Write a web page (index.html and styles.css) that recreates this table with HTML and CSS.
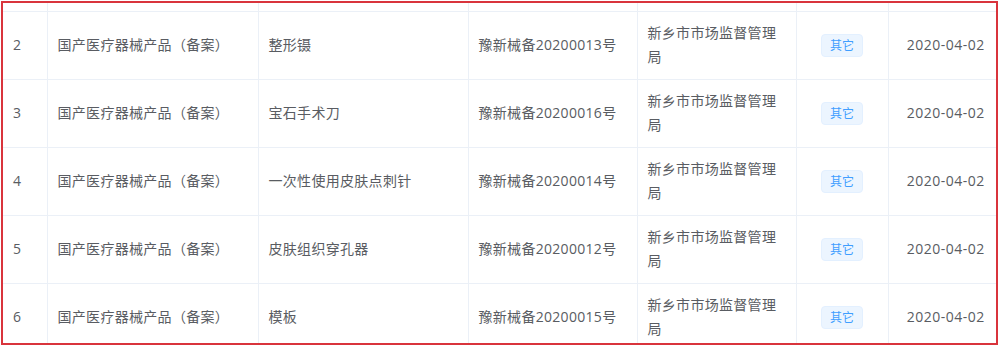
FILE: index.html
```html
<!DOCTYPE html>
<html lang="zh-CN">
<head>
<meta charset="utf-8">
<title>备案列表</title>
<link rel="stylesheet" href="styles.css">
</head>
<body>
<div class="frame">
  <table class="grid">
    <colgroup>
      <col class="c-no"><col class="c-type"><col class="c-name"><col class="c-code"><col class="c-org"><col class="c-tag"><col class="c-date">
    </colgroup>
    <tbody>
      <tr class="spacer"><td></td><td></td><td></td><td></td><td></td><td></td><td></td></tr>
      <tr>
        <td>2</td><td>国产医疗器械产品（备案）</td><td>整形镊</td><td>豫新械备20200013号</td><td>新乡市市场监督管理局</td>
        <td class="center"><span class="tag">其它</span></td><td class="date">2020-04-02</td>
      </tr>
      <tr>
        <td>3</td><td>国产医疗器械产品（备案）</td><td>宝石手术刀</td><td>豫新械备20200016号</td><td>新乡市市场监督管理局</td>
        <td class="center"><span class="tag">其它</span></td><td class="date">2020-04-02</td>
      </tr>
      <tr>
        <td>4</td><td>国产医疗器械产品（备案）</td><td>一次性使用皮肤点刺针</td><td>豫新械备20200014号</td><td>新乡市市场监督管理局</td>
        <td class="center"><span class="tag">其它</span></td><td class="date">2020-04-02</td>
      </tr>
      <tr>
        <td>5</td><td>国产医疗器械产品（备案）</td><td>皮肤组织穿孔器</td><td>豫新械备20200012号</td><td>新乡市市场监督管理局</td>
        <td class="center"><span class="tag">其它</span></td><td class="date">2020-04-02</td>
      </tr>
      <tr>
        <td>6</td><td>国产医疗器械产品（备案）</td><td>模板</td><td>豫新械备20200015号</td><td>新乡市市场监督管理局</td>
        <td class="center"><span class="tag">其它</span></td><td class="date">2020-04-02</td>
      </tr>
    </tbody>
  </table>
</div>
</body>
</html>
```

FILE: styles.css
```css
html, body {
  margin: 0;
  padding: 0;
  background: #ffffff;
}

body {
  width: 1000px;
  height: 347px;
  overflow: hidden;
}

.frame {
  box-sizing: border-box;
  margin: 1px 0 0 1px;
  width: 997px;
  height: 344px;
  border: 2px solid #d9343c;
  overflow: hidden;
  background: #ffffff;
}

.grid {
  border-collapse: collapse;
  table-layout: fixed;
  width: 994px;
  font-family: "Open Sans", "Noto Sans CJK SC", sans-serif;
  font-size: 14px;
  letter-spacing: 0.3px;
  color: #595c62;
}

.c-no { width: 44px; }
.c-type { width: 211px; }
.c-name { width: 210px; }
.c-code { width: 169px; }
.c-org { width: 159px; }
.c-tag { width: 92px; }
.c-date { width: 109px; }

.grid td {
  box-sizing: border-box;
  height: 68px;
  padding: 0 10px;
  border-right: 1px solid #ebf0f7;
  border-bottom: 1px solid #ebf0f7;
  vertical-align: middle;
  line-height: 24px;
  text-align: left;
  word-break: break-all;
}

.grid td:last-child {
  border-right: none;
}

.grid .spacer td {
  height: 8px;
  padding: 0;
  line-height: 0;
}

.grid td.center {
  text-align: center;
  padding: 0;
}

.grid td.date {
  text-align: center;
  padding: 0 0 0 6px;
  letter-spacing: 0.5px;
}

.tag {
  display: inline-block;
  box-sizing: border-box;
  height: 23px;
  padding: 0 8px;
  line-height: 21px;
  font-size: 12px;
  letter-spacing: 0;
  color: #409eff;
  background: #ecf5ff;
  border: 1px solid #e3f0ff;
  border-radius: 4px;
  vertical-align: middle;
}
```
